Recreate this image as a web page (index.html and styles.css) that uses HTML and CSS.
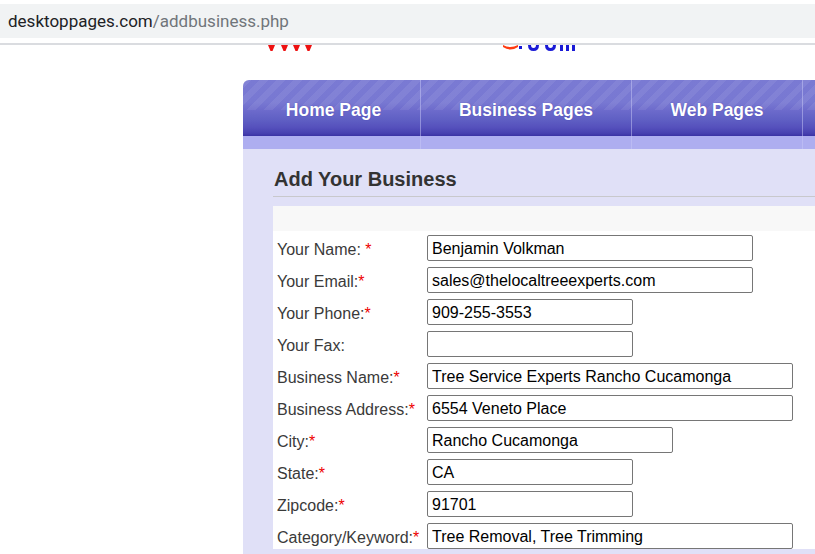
FILE: index.html
```html
<!DOCTYPE html>
<html>
<head>
<meta charset="utf-8">
<title>Add Your Business</title>
<link rel="stylesheet" href="styles.css">
</head>
<body>
<div class="chrome">
  <div class="urlbar"><span class="host">desktoppages.com</span><span class="path">/addbusiness.php</span></div>
  <div class="chrome-line"></div>
</div>
<div class="page">
  <div class="logo">
    <svg width="360" height="35" viewBox="0 0 360 35">
      <g fill="#ee1111">
        <polygon points="25,0 32,0 29.5,6 27.5,6"/>
        <polygon points="38,0 45,0 42.5,6 40.5,6"/>
        <polygon points="50,0 57,0 54.5,6 52.5,6"/>
        <polygon points="62,0 69,0 66.5,6 64.5,6"/>
      </g>
      <path d="M260 0 Q267 4 275 0 L275 2 Q267 7 260 2 Z" fill="#ff3a10"/>
      <g fill="#1a1ad6">
        <rect x="276" y="1" width="3" height="3"/>
        <path d="M285 0 h3 q0 3 2.5 3 q2.5 0 2.5 -3 h3 q0 6 -5.5 6 q-5.5 0 -5.5 -6 Z"/>
        <path d="M302 0 h3 q0 3 2.5 3 q2.5 0 2.5 -3 h3 q0 6 -5.5 6 q-5.5 0 -5.5 -6 Z"/>
        <rect x="317" y="0" width="3" height="6"/>
        <rect x="323" y="0" width="3" height="6"/>
        <rect x="329" y="0" width="3" height="6"/>
      </g>
    </svg>
  </div>
  <div class="main">
    <nav class="menu">
      <div class="col c-home"><a class="item" href="#">Home Page</a></div>
      <div class="col c-biz"><a class="item" href="#">Business Pages</a></div>
      <div class="col c-web"><a class="item" href="#">Web Pages</a></div>
      <div class="col c-more"></div>
    </nav>
    <div class="content">
      <h2 class="title">Add Your Business</h2>
      <div class="formbox">
        <div class="formtop"></div>
        <form class="form">
          <label class="lbl">Your Name: <span class="req">*</span></label>
          <input class="field w-md" type="text" value="Benjamin Volkman">
          <label class="lbl">Your Email:<span class="req">*</span></label>
          <input class="field w-md" type="text" value="sales@thelocaltreeexperts.com">
          <label class="lbl">Your Phone:<span class="req">*</span></label>
          <input class="field w-sm" type="text" value="909-255-3553">
          <label class="lbl">Your Fax:</label>
          <input class="field w-sm" type="text" value="">
          <label class="lbl">Business Name:<span class="req">*</span></label>
          <input class="field w-lg" type="text" value="Tree Service Experts Rancho Cucamonga">
          <label class="lbl">Business Address:<span class="req">*</span></label>
          <input class="field w-lg" type="text" value="6554 Veneto Place">
          <label class="lbl">City:<span class="req">*</span></label>
          <input class="field w-city" type="text" value="Rancho Cucamonga">
          <label class="lbl">State:<span class="req">*</span></label>
          <input class="field w-sm" type="text" value="CA">
          <label class="lbl">Zipcode:<span class="req">*</span></label>
          <input class="field w-sm" type="text" value="91701">
          <label class="lbl">Category/Keyword:<span class="req">*</span></label>
          <input class="field w-lg" type="text" value="Tree Removal, Tree Trimming">
        </form>
      </div>
    </div>
  </div>
</div>
</body>
</html>
```
FILE: styles.css
```css
html, body {
  margin: 0;
  padding: 0;
  overflow: hidden;
  background: #ffffff;
}
body {
  width: 815px;
  height: 554px;
  font-family: "Liberation Sans", Arial, sans-serif;
}
.chrome {
  padding-top: 4px;
  background: #ffffff;
}
.urlbar {
  height: 34px;
  background: #f1f3f4;
  padding-left: 8px;
  display: flex;
  align-items: center;
  font-family: Roboto, "Liberation Sans", sans-serif;
  font-size: 17px;
}
.host { color: #202124; }
.path { color: #70757a; }
.chrome-line {
  margin-top: 5px;
  height: 2px;
  background: #dadce0;
}
.page {
  width: 1000px;
}
.logo {
  height: 35px;
  padding-left: 243px;
  display: flex;
}
.logo svg { display: block; }
.main {
  margin-left: 243px;
  width: 700px;
}
.menu {
  display: flex;
  height: 69px;
  border-top-left-radius: 6px;
  overflow: hidden;
  background:
    repeating-linear-gradient(135deg, rgba(255,255,255,0.07) 0 6px, rgba(255,255,255,0) 6px 12px) top / 100% 30px no-repeat,
    linear-gradient(to bottom, #7a7ad3 0%, #7878d2 40%, #6c6acb 55%, #6060c4 70%, #5550bc 85%, #4740b0 95%, #3a32a4 100%) top / 100% 56px no-repeat,
    #aeaef0;
}
.col {
  box-sizing: border-box;
  border-right: 1px solid rgba(200,200,245,0.5);
  height: 69px;
}
.c-home { width: 178px; }
.c-biz { width: 211px; }
.c-web { width: 171px; }
.c-more { width: 140px; border-right: 0; }
.item {
  display: flex;
  align-items: center;
  justify-content: center;
  height: 56px;
  padding-top: 5px;
  box-sizing: border-box;
  color: #ffffff;
  font-weight: bold;
  font-size: 17.5px;
  text-decoration: none;
  text-shadow: 0 0 1px #3a3aa8;
  white-space: nowrap;
}
.c-home .item { padding-left: 4px; }
.content {
  background: #e0e0f7;
  padding: 19px 0 0 30px;
  height: 420px;
}
.title {
  margin: 0;
  font-size: 20px;
  line-height: 23px;
  font-weight: bold;
  color: #333333;
  padding: 0 0 5px 1px;
  border-bottom: 1px solid #c8c8cc;
}
.formbox {
  margin-top: 9px;
  background: #ffffff;
}
.formtop {
  height: 25px;
  background: #f8f8f8;
}
.form {
  display: grid;
  grid-template-columns: 154px auto;
  row-gap: 6px;
  padding-top: 4px;
  align-items: center;
  justify-items: start;
}
.lbl {
  padding: 3px 0 0 4px;
  font-size: 16px;
  color: #3a3a3a;
  white-space: nowrap;
}
.req { color: #ee0000; }
.field {
  box-sizing: border-box;
  height: 26px;
  margin: 0;
  padding: 1px 4px 0;
  border: 1px solid #767676;
  border-radius: 2px;
  font-family: "Liberation Sans", Arial, sans-serif;
  font-size: 16px;
  color: #000000;
  background: #ffffff;
}
.w-md { width: 326px; }
.w-sm { width: 206px; }
.w-lg { width: 366px; }
.w-city { width: 246px; }
```
